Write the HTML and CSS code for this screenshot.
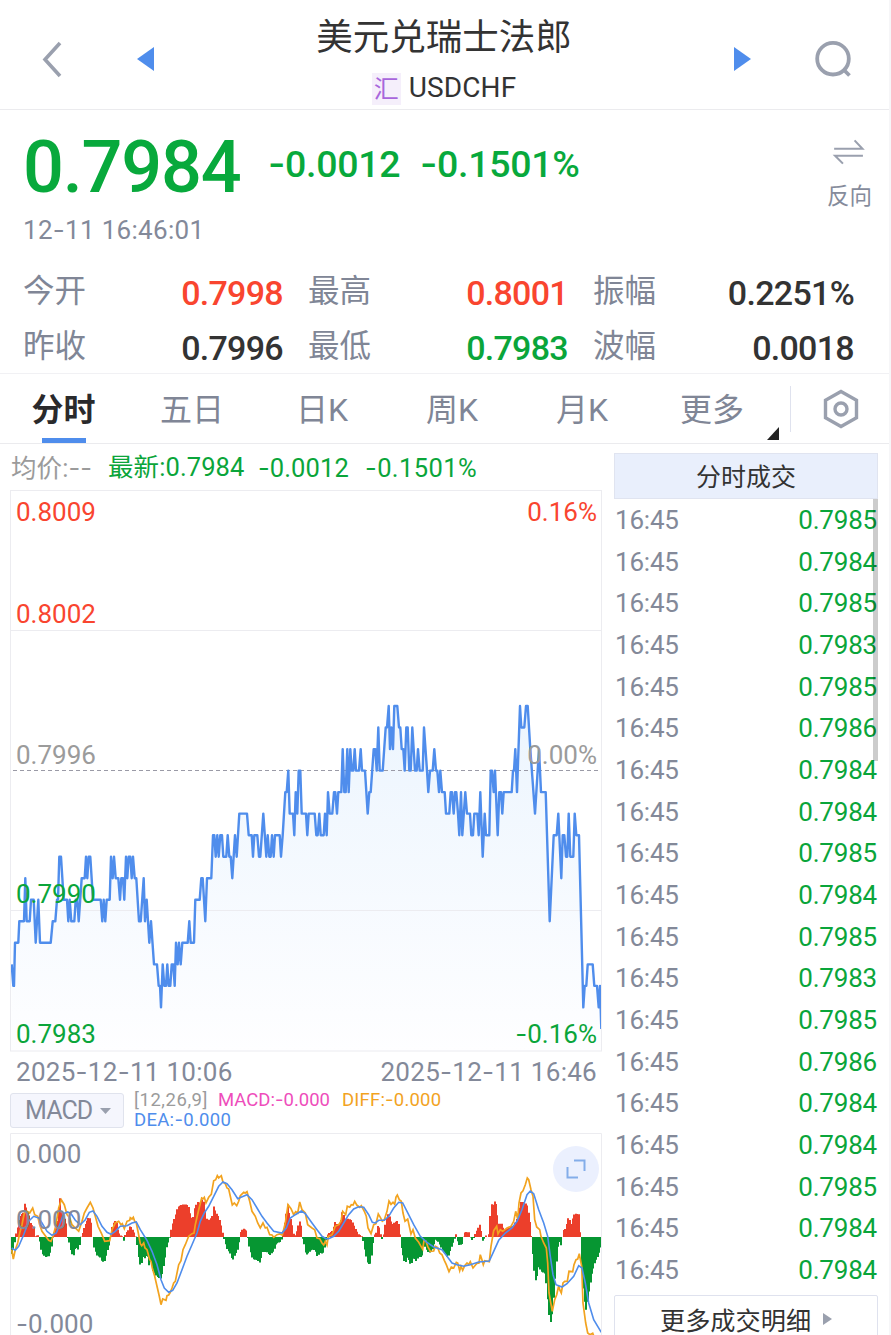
FILE: index.html
```
<!DOCTYPE html>
<html lang="zh-CN">
<head>
    <meta charset="UTF-8">
    <meta name="viewport" content="width=device-width, initial-scale=1.0">
    <title>美元兑瑞士法郎 USDCHF</title>
    <link rel="stylesheet" href="styles.css">
</head>
<body>
<div class="page">

<header class="topbar">
    <svg class="back" width="22" height="38" viewBox="0 0 22 38"><path d="M19 3 L4 19.5 L19 36"/></svg>
    <svg class="prev" width="17" height="24" viewBox="0 0 17 24"><path d="M17 0 V24 L0 12 Z"/></svg>
    <div class="title">
        <h1>美元兑瑞士法郎</h1>
        <div class="symbol"><span class="tag">汇</span><span>USDCHF</span></div>
    </div>
    <svg class="next" width="17" height="24" viewBox="0 0 17 24"><path d="M0 0 V24 L17 12 Z"/></svg>
    <svg class="search" width="38" height="38" viewBox="0 0 38 38"><circle cx="18" cy="18.7" r="15.8"/><path d="M28.5 29.5 L34.5 35.5"/></svg>
</header>

<section class="quote">
    <div class="price-row">
        <span class="price">0.7984</span>
        <span class="change"><i>-</i>0.0012</span>
        <span class="percent"><i>-</i>0.1501%</span>
        <div class="reverse">
            <svg width="34" height="28" viewBox="0 0 34 28"><path d="M1 10.5 H31.5 L23 1.5 M32 18 H2 L10.5 26.5"/></svg>
            <span>反向</span>
        </div>
    </div>
    <div class="time">12<i>-</i>11 16:46:01</div>
    <div class="stats">
        <div><span>今开</span><b class="up">0.7998</b></div>
        <div><span>最高</span><b class="up">0.8001</b></div>
        <div><span>振幅</span><b>0.2251%</b></div>
        <div><span>昨收</span><b>0.7996</b></div>
        <div><span>最低</span><b class="down">0.7983</b></div>
        <div><span>波幅</span><b>0.0018</b></div>
    </div>
</section>

<nav class="tabs">
    <a class="active">分时</a>
    <a>五日</a>
    <a>日K</a>
    <a>周K</a>
    <a>月K</a>
    <a class="more">更多</a>
    <div class="settings">
        <svg width="36" height="40" viewBox="0 0 36 40"><path d="M18 2.5 L33.5 11.2 V28.8 L18 37.5 L2.5 28.8 V11.2 Z"/><circle cx="18" cy="20" r="6"/></svg>
    </div>
</nav>

<main>
    <div class="charts">
        <div class="info"><span class="avg">均价:<i>--</i></span><span class="last">最新:0.7984</span><span class="chg"><i>-</i>0.0012</span><span class="pct"><i>-</i>0.1501%</span></div>

        <div class="chart">
            <svg width="592" height="562" viewBox="0 0 592 562">
                <defs>
                    <linearGradient id="fade" gradientUnits="userSpaceOnUse" x1="0" y1="215" x2="0" y2="562">
                        <stop offset="0" stop-color="#ecf5fe"/>
                        <stop offset="1" stop-color="#fefeff"/>
                    </linearGradient>
                </defs>
                <path id="area" fill="url(#fade)"/>
                <path class="grid" d="M0 140.5 H592 M0 420.5 H592"/>
                <path class="zero" d="M3 280.5 H592"/>
                <path id="line" class="line"/>
                <rect class="frame" x="0.5" y="0.5" width="591" height="560.5"/>
            </svg>
            <span class="label l up y1">0.8009</span>
            <span class="label r up y1">0.16%</span>
            <span class="label l up y2">0.8002</span>
            <span class="label l mid y3">0.7996</span>
            <span class="label r mid y3">0.00%</span>
            <span class="label l down y4">0.7990</span>
            <span class="label l down y5">0.7983</span>
            <span class="label r down y5"><i>-</i>0.16%</span>
        </div>

        <div class="dates"><span>2025<i>-</i>12<i>-</i>11 10:06</span><span>2025<i>-</i>12<i>-</i>11 16:46</span></div>

        <div class="indicator">
            <div class="select">MACD<svg width="11" height="6" viewBox="0 0 11 6"><path d="M0 0 H11 L5.5 6 Z"/></svg></div>
            <div class="legend">
                <div><span class="params">[12,26,9]</span><span class="macd">MACD:<i>-</i>0.000</span><span class="diff">DIFF:<i>-</i>0.000</span></div>
                <div><span class="dea">DEA:<i>-</i>0.000</span></div>
            </div>
        </div>

        <div class="chart macd-chart">
            <svg width="592" height="202" viewBox="0 0 592 202">
                <path id="barsUp" class="bar-up"/>
                <path id="barsDown" class="bar-down"/>
                <path id="diff" class="diff-line"/>
                <path id="dea" class="dea-line"/>
                <path class="grid" d="M0.5 202 V0.5 H591.5 V202"/>
            </svg>
            <span class="label l m1">0.000</span>
            <span class="label l m2">0.000</span>
            <span class="label l m3"><i>-</i>0.000</span>
            <div class="expand"><svg width="20" height="20" viewBox="0 0 20 20"><path d="M8 1.5 H18.5 V12 M1.5 8 V18.5 H12"/></svg></div>
        </div>
    </div>

    <aside class="trades">
        <h2>分时成交</h2>
        <ul id="tradeList"></ul>
        <div class="scroll"></div>
        <a class="detail">更多成交明细<svg width="9" height="12" viewBox="0 0 9 12"><path d="M0 0 L9 6 L0 12 Z"/></svg></a>
    </aside>
</main>

</div>
<script src="script.js"></script>
</body>
</html>
```
FILE: styles.css
```
* {
    box-sizing: border-box;
}

body {
    margin: 0;
    height: 1335px;
    overflow: hidden;
    background-color: #f6f6f8;
    font-family: Roboto, "Noto Sans CJK SC", sans-serif;
    color: #333;
}

.page {
    width: 889px;
    height: 1335px;
    overflow: hidden;
    background-color: #fff;
}

h1, h2, ul {
    margin: 0;
    padding: 0;
    font-weight: 400;
}

svg {
    display: block;
    fill: none;
}

/* wide dash */
i {
    font-family: Inter, sans-serif;
    font-style: normal;
}

.up { color: #f9452f; }
.down { color: #0aa53a; }
.mid { color: #9b9b9b; }

.topbar {
    display: flex;
    align-items: center;
    height: 110px;
    padding: 9px 36px 0 41px;
    border-bottom: 1px solid #ebebee;
}

.back { stroke: #9aa0ae; stroke-width: 3.6; }
.prev { margin-left: 74px; fill: #4f8dec; }
.next { fill: #4f8dec; }
.search { margin-left: 64px; stroke: #9aa0ae; stroke-width: 3.8; }

.title {
    flex: 1;
    text-align: center;
}

h1 {
    font-size: 36.5px;
    line-height: 52px;
    margin-top: 4px;
}

.symbol {
    display: flex;
    justify-content: center;
    align-items: center;
    gap: 8px;
    height: 46px;
    font-size: 28px;
    letter-spacing: 0.1px;
}

.tag {
    width: 29px;
    height: 32px;
    margin-top: 3px;
    background-color: #f5effb;
    color: #a866dc;
    font-size: 25px;
    line-height: 34px;
    text-align: center;
}

.quote {
    height: 264px;
    padding: 14px 0 0 23px;
    border-bottom: 1px solid #f1f1f4;
}

.price-row {
    display: flex;
    height: 88px;
    line-height: 88px;
    color: #08a93c;
    font-weight: 500;
}

.price {
    width: 245px;
    font-size: 72px;
    letter-spacing: -1.2px;
}

.change, .percent {
    font-size: 37.5px;
    line-height: 80px;
    letter-spacing: -0.3px;
}

.change { width: 152px; }

.reverse {
    display: flex;
    flex-direction: column;
    align-items: center;
    margin: 15px 17px 0 auto;
    font-size: 22.5px;
    font-weight: 400;
    line-height: 32px;
    color: #858b9b;
}

.reverse svg { stroke: #9aa0ae; stroke-width: 2.2; margin-bottom: 15px; }

.time {
    font-size: 26px;
    line-height: 36px;
    color: #838999;
    letter-spacing: 0.3px;
}

.stats {
    display: grid;
    grid-template-columns: 260px 260px 261px;
    grid-auto-rows: 55px;
    column-gap: 25px;
    margin-top: 16px;
}

.stats div {
    display: flex;
    justify-content: space-between;
    line-height: 55px;
}

.stats span { font-size: 31.5px; line-height: 55px; color: #808696; }
.stats b { font-size: 34px; font-weight: 500; line-height: 58px; letter-spacing: -0.7px; }

.tabs {
    display: flex;
    height: 70px;
    padding-left: 0;
    border-bottom: 1px solid #ebebee;
    line-height: 72px;
    font-size: 32px;
    color: #808696;
}

.tabs a {
    position: relative;
    width: 130px;
    text-align: center;
}

.tabs a:first-child { width: 127px; }
.tabs .active { color: #2a2a2c; font-weight: 700; }

.active::after {
    content: "";
    position: absolute;
    left: 42px;
    bottom: 0;
    width: 44px;
    height: 5px;
    background-color: #4f8dec;
}

.more::after {
    content: "";
    position: absolute;
    right: -2px;
    bottom: 3px;
    border-bottom: 13px solid #222;
    border-left: 12px solid transparent;
}

.settings {
    height: 46px;
    margin: 12px 0 0 13px;
    padding: 3px 0 0 32px;
    border-left: 1px solid #dfe2ee;
}

.settings svg { stroke: #9aa0ae; stroke-width: 3.4; }

main {
    display: flex;
    padding-left: 10px;
}

.charts { width: 592px; }

.info {
    display: flex;
    height: 46px;
    padding-left: 1px;
    line-height: 47px;
    font-size: 25.5px;
    letter-spacing: 0.1px;
    color: #0aa53a;
}

.avg { width: 97px; color: #9b9b9b; }
.last { width: 150px; }
.chg { width: 107px; }
.pct { letter-spacing: 0.4px; }

.chart {
    position: relative;
    height: 562px;
}

.grid, .frame { stroke: #ececf0; stroke-width: 1; }
.zero { stroke: #9a9aa6; stroke-width: 1; stroke-dasharray: 4 3; }
.line { stroke: #4f8dec; stroke-width: 2.4; stroke-linejoin: round; }

.label {
    position: absolute;
    font-size: 26px;
    line-height: 30px;
}

.l { left: 6px; }
.r { right: 5px; }
.y1 { top: 7px; }
.y2 { top: 109px; }
.y3 { top: 250px; }
.y4 { top: 389px; }
.y5 { top: 529px; }

.dates {
    display: flex;
    justify-content: space-between;
    height: 41px;
    padding: 0 5px 0 6px;
    line-height: 39px;
    font-size: 26px;
    letter-spacing: 0.28px;
    color: #838999;
}

.indicator {
    display: flex;
    height: 40px;
}

.select {
    display: flex;
    align-items: center;
    gap: 8px;
    width: 114px;
    height: 35px;
    padding-left: 14px;
    border: 1px solid #e0e3ed;
    border-radius: 3px;
    background-color: #f5f6fd;
    font-size: 25px;
    letter-spacing: -0.9px;
    color: #838999;
}

.select svg { fill: #9aa0ae; }

.legend {
    padding: 0 0 0 10px;
    font-size: 18.5px;
    line-height: 19px;
    margin-top: -3px;
}

.legend span { margin-right: 10px; }
.params { color: #9b9b9b; letter-spacing: 0.55px; }
.macd { color: #ee4dbb; }
.diff { color: #f2a31f; margin-left: 2px; letter-spacing: 0.2px; }
.dea { color: #4f8dec; letter-spacing: 0.3px; }

.macd-chart { height: 202px; color: #838999; }
.m1 { top: 6px; }
.m2 { top: 72px; }
.m3 { top: 176px; }
.bar-up { fill: #ec3f2b; }
.bar-down { fill: #069632; }
.diff-line { stroke: #f2a31f; stroke-width: 1.7; }
.dea-line { stroke: #4f8dec; stroke-width: 1.6; }

.expand {
    position: absolute;
    top: 13px;
    right: 3px;
    width: 46px;
    height: 46px;
    padding: 13px;
    border-radius: 50%;
    background-color: #ebf0fe;
}

.expand svg { stroke: #84ade9; stroke-width: 2; }

.trades {
    position: relative;
    width: 264px;
    margin: 9px 0 0 12px;
}

h2 {
    height: 46px;
    border: 1px solid #e0e4f0;
    background-color: #e9effc;
    font-size: 25px;
    line-height: 47px;
    text-align: center;
}

.trades li {
    display: flex;
    justify-content: space-between;
    height: 41.67px;
    padding: 0 1px;
    line-height: 42px;
    font-size: 26px;
    color: #838999;
    letter-spacing: -0.2px;
}

.scroll {
    position: absolute;
    top: 46px;
    right: 0;
    width: 5px;
    height: 262px;
    background-color: rgba(0, 0, 0, 0.2);
}

.detail {
    display: flex;
    justify-content: center;
    align-items: center;
    gap: 12px;
    height: 47px;
    margin-top: 5px;
    border: 1px solid #dfe2ee;
    border-radius: 2px;
    font-size: 25.2px;
}

.detail svg { fill: #9aa0ae; }
```
FILE: script.js
```
const trades = [5, 4, 5, 3, 5, 6, 4, 4, 5, 4, 5, 3, 5, 6, 4, 4, 5, 4, 4];

// x in thirds of a pixel, level = ticks of 0.0001 below the day's plotted high
const prices = [
    34,12, 39,13, 41,13, 44,11, 54,11, 57,10, 71,10, 75,8, 79,10, 88,10, 92,9, 100,9, 106,11, 114,9, 119,11, 151,11,
    157,10, 165,10, 170,9, 173,9, 177,7, 182,7, 190,9, 200,9, 204,10, 208,9, 213,10, 222,10, 226,9, 231,9, 235,10,
    244,8, 253,8, 257,7, 261,8, 265,7, 270,7, 278,9, 301,9, 306,10, 310,9, 315,10, 319,9, 328,9, 332,7, 337,8, 341,7,
    346,8, 354,8, 359,9, 363,8, 368,8, 372,9, 377,7, 381,8, 385,7, 390,7, 394,8, 398,7, 403,8, 408,8, 416,10, 421,10,
    430,8, 434,10, 439,9, 447,11, 452,10, 461,12, 470,12, 475,13, 479,13, 482,14, 487,12, 492,13, 497,13, 501,12,
    505,13, 510,13, 514,12, 519,12, 523,13, 527,11, 532,12, 536,11, 541,12, 546,11, 562,11, 567,10, 571,11, 581,11,
    585,9, 598,9, 603,8, 607,8, 615,10, 620,8, 633,8, 638,6, 642,6, 646,7, 651,6, 655,7, 660,6, 665,6, 669,7, 678,7,
    682,6, 687,7, 691,7, 696,8, 704,6, 709,7, 717,5, 740,5, 745,6, 754,6, 758,7, 762,6, 771,6, 776,7, 780,7, 789,5,
    798,7, 802,6, 807,7, 811,7, 815,6, 820,7, 824,6, 838,6, 842,7, 847,6, 855,4, 859,4, 864,3, 868,5, 878,5, 882,6,
    886,4, 891,5, 895,3, 900,3, 904,5, 917,5, 921,6, 925,5, 943,5, 948,6, 952,6, 957,5, 961,6, 970,6, 974,5, 979,6,
    983,4, 988,5, 996,5, 1001,4, 1005,4, 1010,5, 1014,4, 1023,4, 1027,2, 1032,4, 1036,4, 1041,2, 1045,4, 1050,2,
    1054,3, 1059,3, 1063,2, 1067,3, 1076,3, 1081,2, 1085,3, 1094,3, 1102,5, 1107,4, 1111,4, 1120,2, 1125,2, 1129,3,
    1134,1, 1138,3, 1147,3, 1156,1, 1160,1, 1165,0, 1169,2, 1173,1, 1178,2, 1182,0, 1191,0, 1196,1, 1200,1, 1204,2,
    1209,2, 1213,3, 1218,1, 1222,1, 1227,3, 1231,3, 1236,1, 1244,3, 1249,3, 1253,2, 1258,3, 1267,3, 1271,1, 1280,3,
    1284,4, 1289,3, 1297,3, 1302,2, 1307,3, 1311,3, 1316,4, 1320,3, 1325,4, 1333,4, 1337,5, 1347,5, 1351,4, 1355,4,
    1360,5, 1364,4, 1368,4, 1373,5, 1377,6, 1382,4, 1386,6, 1395,4, 1400,5, 1409,5, 1413,6, 1418,6, 1422,5, 1431,5,
    1435,6, 1440,4, 1447,7, 1453,5, 1457,6, 1467,6, 1471,3, 1475,3, 1480,4, 1484,3, 1492,6, 1497,4, 1502,4, 1506,5,
    1510,4, 1534,4, 1538,3, 1541,3, 1545,2, 1550,4, 1559,0, 1563,1, 1572,1, 1577,0, 1582,0, 1590,2, 1604,5, 1616,2,
    1622,4, 1636,4, 1648,10, 1660,6, 1669,6, 1674,5, 1683,8, 1687,6, 1692,6, 1697,7, 1701,7, 1705,5, 1710,7, 1719,7,
    1723,5, 1728,6, 1736,6, 1749,14, 1753,13, 1758,13, 1762,12, 1777,12, 1782,13, 1790,13, 1795,14, 1799,13, 1803,15
];

// histogram heights, positive above the axis
const macd = [
    34,-50, 40,-35, 46,5, 52,30, 58,60, 66,70, 72,75, 75,115, 80,75, 86,70, 92,40, 100,30, 104,2, 110,5, 116,5, 119,-20,
    125,-50, 135,-60, 145,-58, 152,-40, 157,-5, 163,15, 170,40, 176,75, 180,118, 185,75, 190,60, 197,50, 202,-2, 208,-20,
    213,-50, 220,-55, 226,-30, 236,-40, 240,-5, 246,10, 252,30, 258,45, 265,58, 272,55, 277,5, 281,-28, 290,-55, 300,-62,
    306,-75, 314,-72, 320,-45, 328,-20, 332,20, 338,38, 342,50, 348,45, 354,18, 360,5, 366,3, 372,-15, 376,12, 383,18,
    390,35, 397,22, 405,8, 410,-20, 415,-60, 421,-90, 428,-60, 434,-65, 440,-50, 446,-85, 452,-70, 460,-105, 468,-115,
    475,-122, 483,-125, 488,-100, 495,-60, 500,-25, 507,-8, 512,20, 518,45, 525,65, 532,90, 545,97, 560,98, 567,88,
    572,60, 578,55, 584,90, 592,105, 600,102, 608,118, 613,85, 618,55, 626,50, 636,60, 641,92, 648,72, 655,62, 662,40,
    669,5, 673,-10, 680,-35, 690,-50, 697,-72, 702,-58, 709,-45, 715,-30, 718,5, 722,20, 730,25, 740,18, 745,-20,
    750,-40, 757,-65, 763,-68, 772,-70, 780,-78, 786,-45, 800,-45, 808,-55, 820,-42, 828,-20, 840,-15, 846,-5, 850,25,
    856,55, 862,100, 868,65, 874,45, 880,10, 885,5, 890,20, 896,45, 901,50, 905,0, 910,-15, 917,-55, 925,-48, 935,-38,
    945,-40, 952,-60, 958,-48, 968,-50, 975,-25, 980,5, 988,14, 996,18, 1004,45, 1012,35, 1020,40, 1027,78, 1034,55,
    1045,55, 1054,50, 1060,38, 1068,20, 1075,8, 1083,5, 1088,-10, 1095,-50, 1103,-82, 1112,-80, 1118,-30, 1122,5,
    1130,15, 1134,42, 1140,15, 1145,-8, 1150,5, 1155,38, 1162,70, 1167,65, 1175,38, 1185,45, 1193,50, 1198,18,
    1203,-30, 1210,-65, 1215,-80, 1222,-60, 1232,-85, 1240,-62, 1248,-72, 1255,-60, 1265,-60, 1270,-20, 1277,-35,
    1285,-48, 1295,-42, 1305,-8, 1315,-15, 1325,-35, 1335,-50, 1343,-62, 1352,-35, 1362,-8, 1368,10, 1374,-25,
    1385,-22, 1391,8, 1395,15, 1408,14, 1412,-3, 1418,-12, 1423,5, 1430,20, 1440,40, 1444,8, 1448,-16, 1455,5,
    1464,-3, 1469,60, 1474,100, 1480,95, 1484,112, 1489,90, 1494,40, 1505,40, 1512,20, 1520,25, 1530,30, 1540,35,
    1548,50, 1555,75, 1562,105, 1572,105, 1580,95, 1587,60, 1592,20, 1596,-30, 1602,-100, 1608,-138, 1615,-90,
    1625,-105, 1635,-110, 1641,-175, 1648,-250, 1653,-258, 1660,-180, 1667,-90, 1675,-10, 1682,-25, 1690,20, 1696,25,
    1705,60, 1714,36, 1719,65, 1725,70, 1737,68, 1740,5, 1745,-120, 1752,-190, 1758,-222, 1765,-170, 1775,-110,
    1785,-75, 1795,-55, 1802,-30, 1808,-48
];

const diff = [
    34,600, 39,628, 45,600, 52,580, 58,550, 65,525, 72,490, 80,485, 88,490, 97,475, 103,495, 112,500, 118,525, 125,545,
    135,558, 145,572, 152,575, 158,560, 166,530, 175,475, 183,450, 192,465, 200,495, 208,505, 215,525, 225,535, 235,545,
    245,515, 252,490, 260,475, 270,458, 278,475, 285,500, 293,530, 303,550, 313,575, 328,573, 335,540, 345,520, 355,515,
    362,525, 366,522, 372,537, 380,515, 388,512, 390,504, 395,508, 399,503, 403,515, 408,520, 414,550, 420,582, 424,588,
    430,580, 434,595, 440,600, 448,630, 452,635, 456,655, 463,680, 470,710, 477,740, 482,765, 487,748, 497,752, 500,738,
    505,736, 510,728, 515,715, 520,700, 525,695, 535,645, 542,633, 548,600, 555,585, 565,560, 575,552, 581,550, 585,525,
    595,480, 604,445, 609,447, 612,443, 617,460, 625,443, 633,434, 640,393, 646,390, 651,378, 655,385, 663,378, 668,398,
    675,402, 680,415, 685,418, 690,440, 696,466, 702,460, 709,468, 715,455, 720,438, 730,428, 735,430, 740,426, 748,455,
    755,485, 765,500, 772,520, 780,535, 788,520, 795,535, 800,533, 808,555, 815,556, 820,563, 830,555, 838,553, 846,556,
    855,520, 863,465, 872,477, 880,495, 886,486, 892,490, 898,457, 905,480, 915,490, 922,525, 935,535, 943,540, 950,565,
    958,567, 965,580, 970,586, 975,575, 980,586, 984,560, 995,555, 1005,530, 1015,525, 1022,515, 1027,485, 1036,495,
    1041,470, 1048,473, 1053,465, 1058,466, 1063,455, 1070,467, 1078,473, 1083,468, 1092,485, 1098,500, 1103,535,
    1112,552, 1120,525, 1127,522, 1134,493, 1140,503, 1146,515, 1152,510, 1160,485, 1166,454, 1172,464, 1178,458,
    1183,464, 1187,442, 1191,436, 1197,450, 1203,455, 1208,490, 1214,515, 1222,508, 1232,553, 1238,540, 1245,565,
    1255,578, 1262,590, 1267,599, 1271,573, 1277,575, 1282,590, 1290,605, 1300,604, 1305,590, 1312,594, 1318,610,
    1325,615, 1332,632, 1338,645, 1346,666, 1353,652, 1360,655, 1368,638, 1372,640, 1378,663, 1382,650, 1387,662,
    1393,648, 1400,640, 1405,645, 1410,636, 1418,655, 1430,641, 1436,640, 1440,615, 1444,628, 1449,645, 1453,633,
    1467,636, 1472,590, 1480,543, 1489,530, 1493,553, 1500,540, 1507,545, 1520,535, 1532,530, 1540,515, 1546,485,
    1552,508, 1556,460, 1562,430, 1568,423, 1575,405, 1581,385, 1585,390, 1592,420, 1598,440, 1603,510, 1609,532,
    1618,540, 1622,560, 1630,580, 1638,595, 1642,640, 1646,730, 1656,785, 1663,750, 1669,735, 1675,708, 1678,720,
    1683,730, 1688,700, 1693,695, 1701,695, 1706,665, 1717,666, 1721,645, 1727,630, 1732,628, 1737,612, 1744,650,
    1748,760, 1756,820, 1762,850, 1769,855, 1777,851, 1785,870
];

const dea = [
    34,595, 45,602, 55,590, 70,555, 85,515, 100,500, 115,505, 125,520, 140,545, 155,557, 168,550, 180,520, 190,492,
    202,487, 212,492, 225,512, 240,525, 255,510, 267,488, 278,484, 290,500, 305,530, 320,548, 332,554, 345,545, 360,530,
    380,528, 395,520, 408,517, 420,540, 440,572, 455,605, 470,645, 482,690, 492,715, 505,728, 517,722, 530,700, 545,660,
    560,620, 575,585, 590,550, 600,515, 612,490, 625,470, 640,440, 655,410, 668,397, 680,402, 695,420, 712,447, 722,443,
    740,435, 755,450, 770,475, 785,500, 800,520, 820,545, 845,550, 858,535, 870,505, 885,495, 903,484, 915,492, 935,520,
    950,540, 965,560, 977,567, 985,567, 1000,560, 1015,545, 1030,520, 1045,495, 1060,478, 1075,471, 1090,473, 1105,495,
    1116,518, 1125,520, 1135,512, 1152,512, 1165,500, 1180,475, 1195,458, 1207,460, 1220,485, 1240,525, 1260,560,
    1280,578, 1300,592, 1325,600, 1340,620, 1355,640, 1370,645, 1390,650, 1410,645, 1435,637, 1467,634, 1480,605,
    1495,572, 1515,550, 1535,535, 1550,515, 1565,480, 1580,435, 1590,424, 1600,432, 1615,480, 1630,520, 1642,560,
    1650,620, 1658,675, 1667,705, 1685,712, 1700,702, 1720,680, 1735,648, 1745,655, 1755,700, 1765,760, 1780,810,
    1803,848
];

function toPath(data, scaleY) {
    let d = '';
    for (let i = 0; i < data.length; i += 2) {
        d += (i ? 'L' : 'M') + ((data[i] - 29) / 3).toFixed(1) + ' ' + scaleY(data[i + 1]).toFixed(1);
    }
    return d;
}

function drawPrices() {
    const d = toPath(prices, (level) => 216 + level * 21.53);
    document.getElementById('line').setAttribute('d', d);
    document.getElementById('area').setAttribute('d', d + 'V561H1Z');
}

function drawMacd() {
    const axis = 104;
    let up = '';
    let down = '';
    let k = 0;
    // one bar per minute
    for (let x = 34; x < 1805; x += 4.43) {
        while (macd[k + 2] < x) k += 2;
        const t = (x - macd[k]) / (macd[k + 2] - macd[k]);
        const h = (macd[k + 1] + (macd[k + 3] - macd[k + 1]) * t) / 3;
        const bar = `M${Math.round((x - 32) / 3)} ${axis}v${(-h).toFixed(1)}h2V${axis}Z`;
        if (h > 0) up += bar; else down += bar;
    }
    document.getElementById('barsUp').setAttribute('d', up);
    document.getElementById('barsDown').setAttribute('d', down);
    document.getElementById('diff').setAttribute('d', toPath(diff, (y) => (y - 250) / 3));
    document.getElementById('dea').setAttribute('d', toPath(dea, (y) => (y - 250) / 3));
}

function showTrades() {
    document.getElementById('tradeList').innerHTML = trades
        .map((n) => `<li><span>16:45</span><span class="down">0.798${n}</span></li>`)
        .join('');
}

drawPrices();
drawMacd();
showTrades();
```
